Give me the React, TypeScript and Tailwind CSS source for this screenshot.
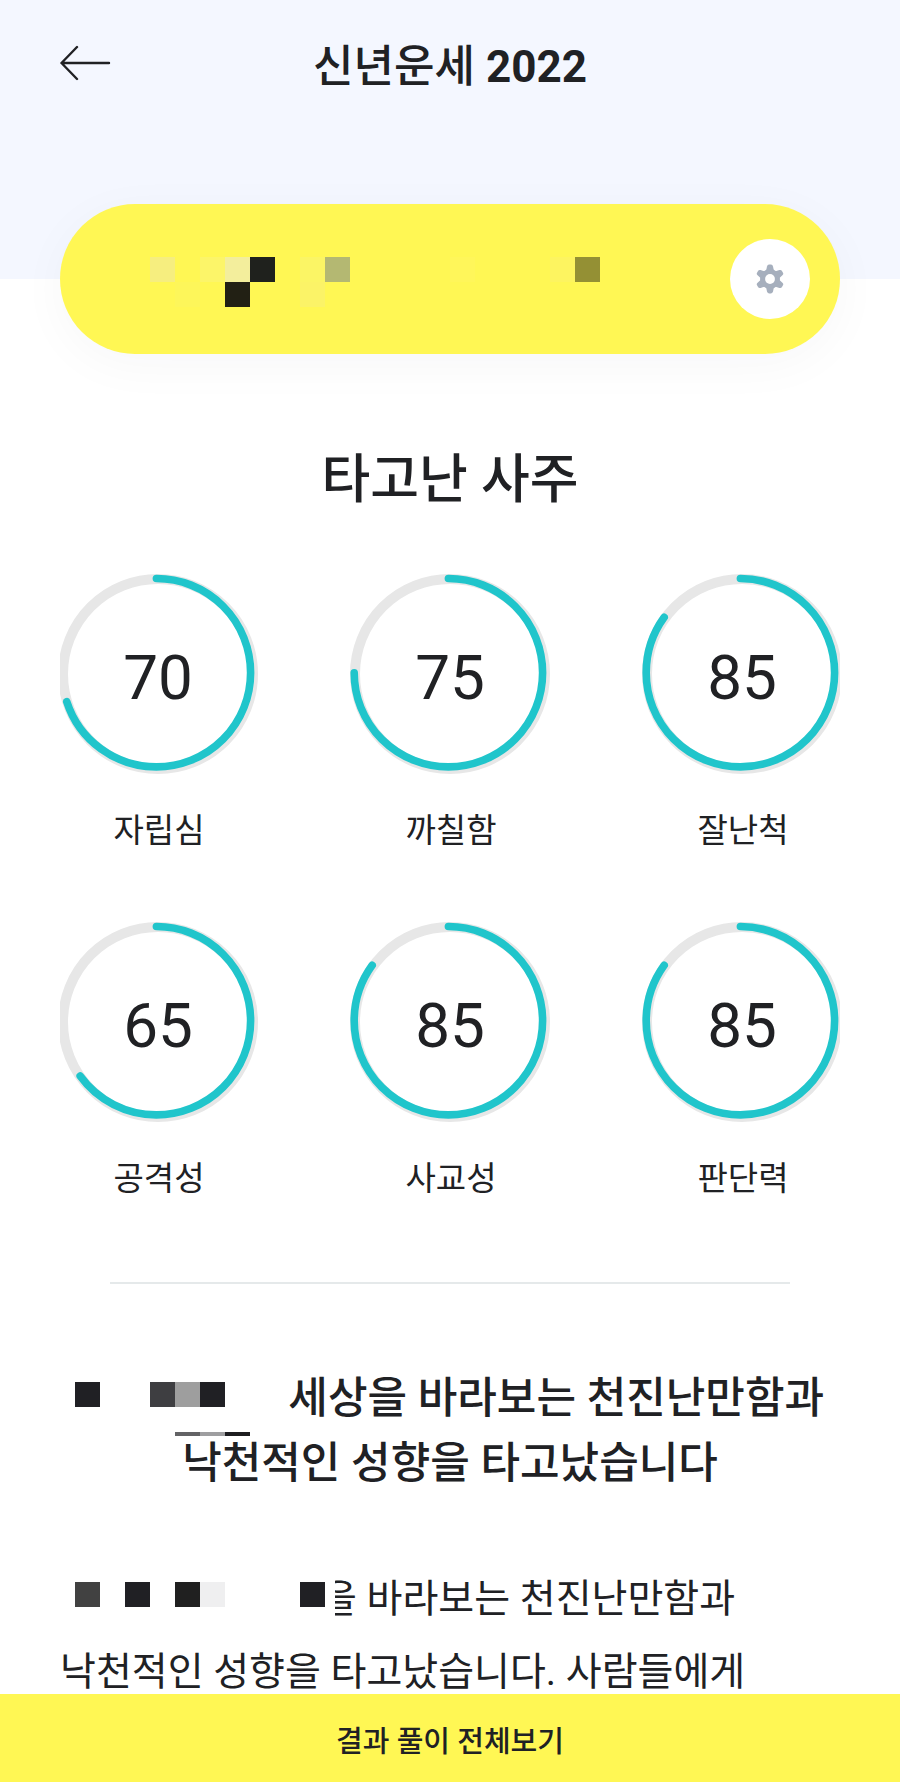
type Trait = { label: string; score: number };

const traits: Trait[] = [
  { label: "자립심", score: 70 },
  { label: "까칠함", score: 75 },
  { label: "잘난척", score: 85 },
  { label: "공격성", score: 65 },
  { label: "사교성", score: 85 },
  { label: "판단력", score: 85 },
];

/** A run of 25px mosaic squares that hides a private name. */
function Mosaic({ cells, height = "h-[25px]" }: { cells: string[]; height?: string }) {
  return (
    <span className="flex shrink-0" aria-hidden="true">
      {cells.map((cell, i) => (
        <span key={i} className={`block w-[25px] ${height} ${cell}`} />
      ))}
    </span>
  );
}

function Gauge({ label, score }: Trait) {
  return (
    <li className="flex w-[196px] flex-col items-center gap-[34px]">
      <div className="grid place-items-center">
        <svg
          viewBox="0 0 196 196"
          className="col-start-1 row-start-1 size-[196px] overflow-visible"
          fill="none"
          aria-hidden="true"
        >
          <circle cx="98" cy="98" r="95" stroke="#e7e7e7" strokeWidth="10" />
          <circle
            cx="96.4"
            cy="96.7"
            r="94.2"
            stroke="#20c5cb"
            strokeWidth="7.6"
            strokeLinecap="round"
            pathLength="100"
            strokeDasharray={`${score} 100`}
            transform="rotate(-90 96.4 96.7)"
          />
        </svg>
        <span className="col-start-1 row-start-1 pt-2 text-[62px] leading-[64px]">{score}</span>
      </div>
      <span className="pl-0.5 text-[33px] leading-[50px]">{label}</span>
    </li>
  );
}

export default function App() {
  return (
    <div className="min-h-screen bg-white pb-[88px] font-['Roboto','Noto_Sans_CJK_KR',sans-serif] text-[#202124]">
      <header className="grid grid-cols-[1fr_auto_1fr] items-start bg-[#f4f7ff] px-[60px] pt-9 pb-[181px]">
        <button type="button" aria-label="뒤로" className="mt-[9px] w-[51px]">
          <svg
            viewBox="0 0 51 36"
            className="h-9 w-[51px]"
            fill="none"
            stroke="#202124"
            strokeWidth="2.4"
            strokeLinecap="round"
            strokeLinejoin="round"
            aria-hidden="true"
          >
            <path d="M49 18H1.5M17 2L1.5 18L17 34" />
          </svg>
        </button>
        <h1 className="text-[44px] leading-[62px] font-medium">
          신년운세 <span className="font-bold">2022</span>
        </h1>
      </header>

      <main className="px-[60px]">
        <section className="relative -mt-[75px] flex h-[150px] items-center justify-between rounded-full bg-[#fff754] pr-[30px] pl-[90px] shadow-[0_10px_50px_rgba(30,40,50,0.035)]">
          <div className="flex flex-col pt-1.5">
            <Mosaic
              cells={[
                "bg-[#f6ee7f]",
                "bg-transparent",
                "bg-[#fcf569]",
                "bg-[#f3ee9c]",
                "bg-[#1f211d]",
                "bg-transparent",
                "bg-[#fbf565]",
                "bg-[#b4b872]",
                "bg-transparent",
                "bg-transparent",
                "bg-transparent",
                "bg-transparent",
                "bg-[#fff65a]",
                "bg-transparent",
                "bg-transparent",
                "bg-transparent",
                "bg-[#fdf460]",
                "bg-[#949034]",
              ]}
            />
            <Mosaic
              cells={[
                "bg-transparent",
                "bg-[#fdf65a]",
                "bg-transparent",
                "bg-[#222014]",
                "bg-transparent",
                "bg-transparent",
                "bg-[#fbf367]",
              ]}
            />
          </div>
          <button
            type="button"
            aria-label="설정"
            className="grid size-20 place-items-center rounded-full bg-white"
          >
            <svg viewBox="0 0 28 30" className="h-[30px] w-7" aria-hidden="true">
              <g fill="#a6afbd">
                <circle cx="14" cy="15" r="10" />
                <path
                  id="gear-tooth"
                  d="M9.8 8L11 2.4Q11.4 0.6 13 0.6H15Q16.6 0.6 17 2.4L18.2 8V22L17 27.6Q16.6 29.4 15 29.4H13Q11.4 29.4 11 27.6L9.8 22Z"
                />
                <use href="#gear-tooth" transform="rotate(60 14 15)" />
                <use href="#gear-tooth" transform="rotate(120 14 15)" />
              </g>
              <circle cx="14" cy="15" r="4.9" fill="#fff" />
            </svg>
          </button>
        </section>

        <section className="mt-[90px]">
          <h2 className="text-center text-[53px] leading-[72px] font-medium">타고난 사주</h2>
          <ul className="mt-[60px] grid grid-cols-[repeat(3,196px)] justify-between gap-y-[68px] overflow-x-clip">
            {traits.map((trait) => (
              <Gauge key={trait.label} {...trait} />
            ))}
          </ul>
        </section>

        <hr className="mx-[50px] mt-[78px] border-t-2 border-[#e5e9ea]" />

        <section className="mt-[82px]">
          <h2 className="relative text-[43px] leading-[65px] font-medium">
            <span className="flex justify-between pr-4 pl-[15px]">
              <span className="pt-4">
                <Mosaic
                  cells={[
                    "bg-[#202024]",
                    "bg-transparent",
                    "bg-transparent",
                    "bg-[#3e3e41]",
                    "bg-[#9e9e9e]",
                    "bg-[#202024]",
                  ]}
                />
              </span>
              <span>세상을 바라보는 천진난만함과</span>
            </span>
            <span className="absolute top-[66px] left-[115px]">
              <Mosaic height="h-1" cells={["bg-[#636365]", "bg-[#9e9ea0]", "bg-[#1d1d20]"]} />
            </span>
            <span className="block text-center">낙천적인 성향을 타고났습니다</span>
          </h2>

          <p className="mt-[67px] text-[39px] leading-[73px]">
            <span className="flex pl-[15px]">
              <span className="relative z-10 bg-white pt-[19px] pr-[10px]">
                <Mosaic
                  cells={[
                    "bg-[#414141]",
                    "bg-transparent",
                    "bg-[#202024]",
                    "bg-transparent",
                    "bg-[#202020]",
                    "bg-[#efeff0]",
                    "bg-transparent",
                    "bg-transparent",
                    "bg-transparent",
                    "bg-[#202024]",
                  ]}
                />
              </span>
              <span className="-ml-[14px]">을 바라보는 천진난만함과</span>
            </span>
            <span className="block">낙천적인 성향을 타고났습니다. 사람들에게</span>
          </p>
        </section>
      </main>

      <button
        type="button"
        className="fixed inset-x-0 bottom-0 z-20 h-[88px] bg-[#fff754] pt-2.5 text-[29px] font-medium"
      >
        결과 풀이 전체보기
      </button>
    </div>
  );
}
